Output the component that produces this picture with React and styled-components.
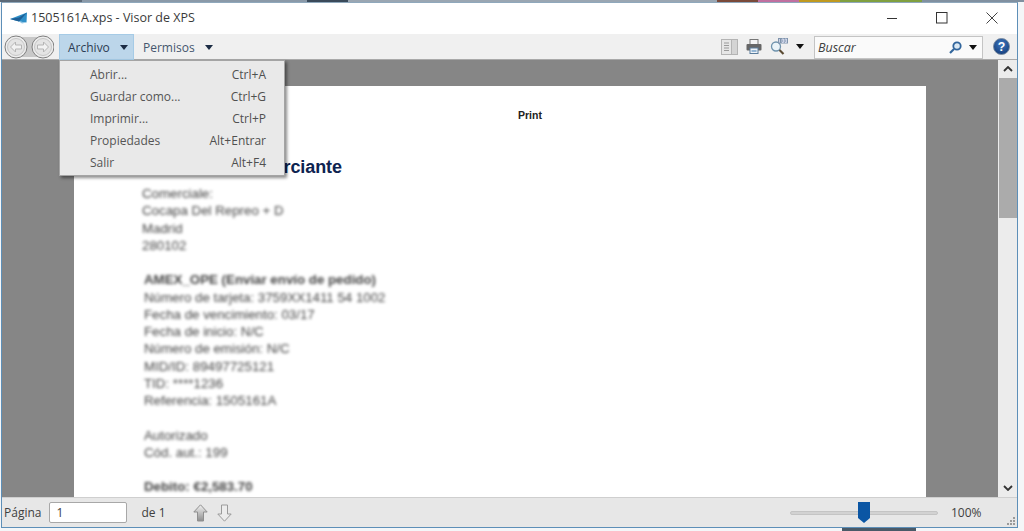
import React from "react";
import styled, { createGlobalStyle } from "styled-components";

const Global = createGlobalStyle`
  html, body { margin: 0; padding: 0; background: #fff; }
  #root { width: 1024px; height: 531px; overflow: hidden; }
  * { box-sizing: border-box; }
`;

const Desktop = styled.div`
  width: 1024px; height: 531px; display: flex; flex-direction: column;
  font-family: "Open Sans", "Noto Sans", sans-serif; background: #f4f6f8;
`;
const TopStrip = styled.div`
  height: 2px; flex: none;
  background: linear-gradient(90deg, #5d6a78 0 8%, #8a99a8 8% 30%, #3a4a5a 30% 34%, #9aa6b2 34% 70%, #7a4a3a 70% 74%, #c070a0 74% 78%, #c09a20 78% 82%, #80a040 82% 90%, #8090a0 90% 100%);
`;
const Frame = styled.div`
  flex: 1; min-height: 0; margin: 0 6px 3px 1px; display: flex; flex-direction: column;
  border: 1px solid #5d8fb8; border-top-color: #8fa8bc; position: relative; background: #fff;
`;
const TitleBar = styled.div`
  height: 31px; flex: none; background: #fff; display: flex; align-items: center; padding: 0 0 2px 8px;
`;
const TitleText = styled.div`
  font-size: 12.5px; color: #3a3a3a; margin-left: 1px; flex: 1; white-space: nowrap;
`;
const Caption = styled.div`
  width: 50px; height: 29px; display: flex; align-items: center; justify-content: center;
`;
const Toolbar = styled.div`
  height: 26px; flex: none; background: #f0f0f0; border-bottom: 1px solid #a9a9a9;
  display: flex; align-items: center; padding-left: 2px; padding-right: 7px;
`;
const NavGroup = styled.div`
  width: 50px; height: 24px; margin-right: 5px; flex: none;
`;
const MenuButton = styled.div`
  height: 26px; align-self: flex-start; display: flex; align-items: center; font-size: 12px;
  padding: 1px 5px 0 8px; width: ${p => p.$w}px; gap: ${p => p.$gap}px; flex: none;
  color: ${p => (p.$active ? "#2c3c52" : "#45566e")};
  background: ${p => (p.$active ? "#bcd6ea" : "transparent")};
  border: 1px solid ${p => (p.$active ? "#a6cbe6" : "transparent")};
`;
const Caret = styled.span`
  width: 0; height: 0; flex: none; border-left: 4.5px solid transparent; border-right: 4.5px solid transparent;
  border-top: 5px solid ${p => p.$color || "#1c2c44"};
`;
const Spacer = styled.div`flex: 1;`;
const ToolIcons = styled.div`
  display: flex; align-items: center; gap: 8px; margin-right: 10px; flex: none;
`;
const SearchBox = styled.div`
  width: 169px; height: 23px; flex: none; margin: 1px 10px 0 0; background: #fafafa; border: 1px solid #c4c4c4;
  display: flex; align-items: center; padding: 0 5px 0 3px; gap: 7px;
`;
const SearchLabel = styled.span`
  flex: 1; font-size: 12.5px; font-style: italic; color: #404040;
`;
const Body = styled.div`
  flex: 1; min-height: 0; display: flex;
`;
const Viewer = styled.div`
  flex: 1; min-width: 0; background: #868686; padding: 26px 72px 0 72px; display: flex; overflow: hidden;
`;
const Paper = styled.div`
  flex: 1; background: #fff; padding: 23px 0 0 68px; overflow: hidden;
`;
const PrintHead = styled.div`
  font: bold 10.5px "Liberation Sans", Arial, sans-serif; color: #222; padding-left: 376px; height: 13px; line-height: 13px;
`;
const DocTitle = styled.div`
  font: bold 18px/22px "Liberation Sans", Arial, sans-serif; color: #0d2350; margin-top: 34px; height: 22px; white-space: nowrap; letter-spacing: -0.1px;
`;
const Blurred = styled.div`
  filter: blur(1.4px); margin-top: 7px; color: #444;
  font: 13.3px/17.25px "Liberation Sans", Arial, sans-serif;
`;
const Line = styled.div`
  height: 17.25px; white-space: nowrap; font-weight: ${p => (p.$b ? 700 : 400)}; padding-left: ${p => (p.$in ? 2 : 0)}px;
`;
const ScrollBar = styled.div`
  width: 19px; flex: none; background: #ececec; display: flex; flex-direction: column; align-items: stretch;
`;
const ScrollBtn = styled.div`
  height: 18px; flex: none; display: flex; align-items: center; justify-content: center;
`;
const ScrollThumb = styled.div`
  height: 140px; flex: none; background: #ababab; margin-left: 1px;
`;
const StatusBar = styled.div`
  height: 30px; flex: none; background: #e7e7e7; border-top: 1px solid #cfcfcf; display: flex; align-items: center;
  padding: 0 3px 0 2px; font-size: 12px; color: #404040; position: relative;
`;
const PageInput = styled.div`
  width: 78px; height: 21px; margin-left: 8px; background: #fff; border: 1px solid #a8a8a8; border-radius: 2px;
  padding-left: 6px; line-height: 19px; flex: none;
`;
const OfLabel = styled.span`margin-left: 14px; width: 52px; flex: none;`;
const ArrowGroup = styled.div`display: flex; gap: 9px; flex: none;`;
const Track = styled.div`
  width: 148px; height: 4px; background: #d2d2d2; border: 1px solid #c4c4c4; border-radius: 2px; position: relative; flex: none; margin-right: 13px;
`;
const Thumb = styled.svg`
  position: absolute; left: 67px; top: -10px;
`;
const Zoom = styled.span`width: 63px; flex: none;`;
const Grip = styled.svg`position: absolute; right: 2px; bottom: 1px;`;
const Menu = styled.div`
  position: absolute; left: 57px; top: 57px; width: 226px; height: 116px; z-index: 3;
  background: #e9e9e9; border: 1px solid #a4a4a4; box-shadow: 2px 2px 3px rgba(0,0,0,.45); padding-top: 2px;
`;
const MenuRow = styled.div`
  height: 22px; display: flex; justify-content: space-between; align-items: center;
  padding: 0 18px 0 30px; font-size: 12px; color: #555;
`;
const RowKey = styled.span`color: #505050;`;
const BottomStrip = styled.div`
  position: absolute; left: 840px; bottom: -4px; width: 74px; height: 3px; background: #4a5a68;
`;

const CloseIcon = () => (
  <svg width="12" height="12" viewBox="0 0 12 12"><path d="M.5.5l11 11M11.5.5l-11 11" stroke="#444" strokeWidth="1" fill="none" /></svg>
);
const MaxIcon = () => (
  <svg width="12" height="12" viewBox="0 0 12 12"><rect x=".5" y=".5" width="10.5" height="10.5" fill="none" stroke="#333" /></svg>
);
const MinIcon = () => (
  <svg width="12" height="12" viewBox="0 0 12 12"><path d="M1 6.5h10" stroke="#333" fill="none" /></svg>
);
const Logo = () => (
  <svg width="20" height="12" viewBox="0 0 20 12">
    <path d="M0 7L17 0.5 16.5 10.5 9 9.5z" fill="#2f8fc8" />
    <path d="M0 7L9 5.5 17 .5 9 9.5z" fill="#1d5e95" />
    <path d="M9 9.5l3 2 4.5-1z" fill="#8fc4e4" />
  </svg>
);
const Nav = () => (
  <svg width="50" height="24" viewBox="0 0 50 24">
    <path d="M12 2h27v20H12z" fill="#c8c8c8" />
    {[12, 39].map(cx => (
      <g key={cx}>
        <circle cx={cx} cy="12" r="11" fill="#ededed" stroke="#7f7f7f" />
        <circle cx={cx} cy="12" r="8.5" fill="#e4e4e4" stroke="#c6c6c6" />
      </g>
    ))}
    <path d="M6.5 12l5-5v3h6v4h-6v3z" fill="#f2f2f2" stroke="#b5b5b5" />
    <path d="M44.5 12l-5-5v3h-6v4h6v3z" fill="#f2f2f2" stroke="#b5b5b5" />
  </svg>
);
const BookIcon = () => (
  <svg width="17" height="16" viewBox="0 0 17 16">
    <rect x=".5" y=".5" width="16" height="15" fill="#e6e6e6" stroke="#b4b4b4" />
    <rect x="10.5" y=".5" width="6" height="15" fill="#d4d4d4" stroke="#b4b4b4" />
    <path d="M3 4h5M3 6.500h5M3 9h5M3 11.500h5" stroke="#9a9a9a" />
  </svg>
);
const PrintIcon = () => (
  <svg width="16" height="15" viewBox="0 0 16 15">
    <rect x="4" y=".5" width="8" height="5" fill="#f4f4f4" stroke="#777" />
    <rect x=".5" y="5" width="15" height="6.500" rx="1" fill="#666" />
    <rect x="4" y="9" width="8" height="5.500" fill="#eef3f8" stroke="#5a7c9c" />
    <path d="M5.500 12h5" stroke="#3a78b0" />
  </svg>
);
const MagIcon = () => (
  <svg width="18" height="17" viewBox="0 0 18 17">
    <circle cx="6" cy="8.500" r="4.500" fill="#eaf3f8" stroke="#6f93ad" strokeWidth="1.300" />
    <path d="M9.500 12l4 4" stroke="#5a4a32" strokeWidth="2.200" />
    <rect x="8" y="0" width="10" height="5.500" fill="#7f94ac" />
    <path d="M9.500 1v3.500M12 1h1.500v3.500H12zM15 1h1.500v3.500H15z" stroke="#eef" strokeWidth=".7" fill="none" />
  </svg>
);
const SearchIcon = () => (
  <svg width="13" height="13" viewBox="0 0 13 13">
    <circle cx="8" cy="5" r="3.700" fill="#dbe8f2" stroke="#31659c" strokeWidth="1.800" />
    <path d="M5 8L1 12" stroke="#31659c" strokeWidth="2.200" />
  </svg>
);
const HelpIcon = () => (
  <svg width="17" height="17" viewBox="0 0 18 18">
    <defs>
      <radialGradient id="hp" cx=".5" cy=".35" r=".7"><stop offset="0" stopColor="#3f78c0" /><stop offset="1" stopColor="#123a78" /></radialGradient>
    </defs>
    <circle cx="9" cy="9" r="8.500" fill="url(#hp)" stroke="#7d8da0" />
    <text x="9" y="13.500" textAnchor="middle" fontFamily="Liberation Sans" fontWeight="700" fontSize="13" fill="#fff">?</text>
  </svg>
);
const Chevron = ({ up }) => (
  <svg width="10" height="6" viewBox="0 0 10 6"><path d={up ? "M1 5l4-4 4 4" : "M1 1l4 4 4-4"} stroke="#333" strokeWidth="1.800" fill="none" /></svg>
);
const UpArrow = () => (
  <svg width="15" height="18" viewBox="0 0 15 18">
    <defs><linearGradient id="ua" x1="0" y1="0" x2="0" y2="1"><stop offset="0" stopColor="#f2f2f2" /><stop offset="1" stopColor="#8e8e8e" /></linearGradient></defs>
    <path d="M7.500 .8L14.200 8H10.500v9h-6V8H.8z" fill="url(#ua)" stroke="#8f8f8f" />
  </svg>
);
const DownArrow = () => (
  <svg width="15" height="18" viewBox="0 0 15 18">
    <path d="M7.500 17.200L14.200 10H10.500V1h-6v9H.8z" fill="#ececec" stroke="#9a9a9a" />
  </svg>
);

const menuItems = [
  ["Abrir...", "Ctrl+A"],
  ["Guardar como...", "Ctrl+G"],
  ["Imprimir...", "Ctrl+P"],
  ["Propiedades", "Alt+Entrar"],
  ["Salir", "Alt+F4"],
];
const lines = [
  { t: "Comerciale:" },
  { t: "Cocapa Del Repreo + D" },
  { t: "Madrid" },
  { t: "280102" },
  { t: "\u00a0" },
  { t: "AMEX_OPE (Enviar envío de pedido)", b: 1, i: 1 },
  { t: "Número de tarjeta: 3759XX1411 54 1002", i: 1 },
  { t: "Fecha de vencimiento: 03/17", i: 1 },
  { t: "Fecha de inicio: N/C", i: 1 },
  { t: "Número de emisión: N/C", i: 1 },
  { t: "MID/ID: 89497725121", i: 1 },
  { t: "TID: ****1236", i: 1 },
  { t: "Referencia: 1505161A", i: 1 },
  { t: "\u00a0" },
  { t: "Autorizado", i: 1 },
  { t: "Cód. aut.: 199", i: 1 },
  { t: "\u00a0" },
  { t: "Debito: €2,583.70", b: 1, i: 1 },
];

export default function App() {
  return (
    <Desktop>
      <Global />
      <TopStrip />
      <Frame>
        <TitleBar>
          <Logo />
          <TitleText>1505161A.xps - Visor de XPS</TitleText>
          <Caption><MinIcon /></Caption>
          <Caption><MaxIcon /></Caption>
          <Caption><CloseIcon /></Caption>
        </TitleBar>
        <Toolbar>
          <NavGroup><Nav /></NavGroup>
          <MenuButton $active $w={75} $gap={10}>Archivo <Caret /></MenuButton>
          <MenuButton $w={84} $gap={10}>Permisos <Caret /></MenuButton>
          <Spacer />
          <ToolIcons>
            <BookIcon />
            <PrintIcon />
            <MagIcon />
            <Caret $color="#111" />
          </ToolIcons>
          <SearchBox>
            <SearchLabel>Buscar</SearchLabel>
            <SearchIcon />
            <Caret $color="#111" />
          </SearchBox>
          <HelpIcon />
        </Toolbar>
        <Body>
          <Viewer>
            <Paper>
              <PrintHead>Print</PrintHead>
              <DocTitle>Recibo del comerciante</DocTitle>
              <Blurred>
                {lines.map((l, i) => (
                  <Line key={i} $b={l.b} $in={l.i}>{l.t}</Line>
                ))}
              </Blurred>
            </Paper>
          </Viewer>
          <ScrollBar>
            <ScrollBtn><Chevron up /></ScrollBtn>
            <ScrollThumb />
            <Spacer />
            <ScrollBtn><Chevron /></ScrollBtn>
          </ScrollBar>
        </Body>
        <StatusBar>
          <span>Página</span>
          <PageInput>1</PageInput>
          <OfLabel>de 1</OfLabel>
          <ArrowGroup><UpArrow /><DownArrow /></ArrowGroup>
          <Spacer />
          <Track>
            <Thumb width="12" height="21" viewBox="0 0 12 21"><path d="M0 0h12v16l-6 5-6-5z" fill="#0b56a4" /></Thumb>
          </Track>
          <Zoom>100%</Zoom>
          <Grip width="9" height="9" viewBox="0 0 9 9"><path d="M7 0h2v2H7zM4 3h2v2H4zM7 3h2v2H7zM1 6h2v2H1zM4 6h2v2H4zM7 6h2v2H7z" fill="#9a9a9a" /></Grip>
        </StatusBar>
        <Menu>
          {menuItems.map(([a, b]) => (
            <MenuRow key={a}><span>{a}</span><RowKey>{b}</RowKey></MenuRow>
          ))}
        </Menu>
        <BottomStrip />
      </Frame>
    </Desktop>
  );
}
